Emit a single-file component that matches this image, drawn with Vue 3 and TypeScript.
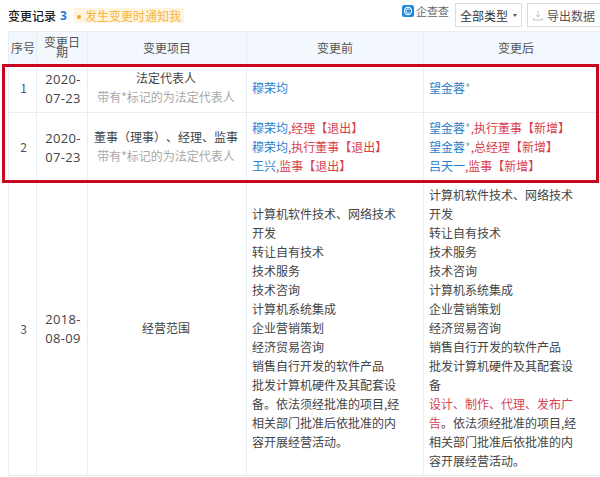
<script setup lang="ts">
interface Part { t: string; c?: string }
type Line = Part[]
const zhu = '带有*标记的为法定代表人'
const scopeBefore = ['计算机软件技术、网络技术开发','转让自有技术','技术服务','技术咨询','计算机系统集成','企业营销策划','经济贸易咨询','销售自行开发的软件产品','批发计算机硬件及其配套设备。依法须经批准的项目,经相关部门批准后依批准的内容开展经营活动。']
const scopeAfterTop = ['计算机软件技术、网络技术开发','转让自有技术','技术服务','技术咨询','计算机系统集成','企业营销策划','经济贸易咨询','销售自行开发的软件产品','批发计算机硬件及其配套设备']
const row2Before: Line[] = [
  [{ t: '穆荣均', c: 'blue' }, { t: ',经理【退出】', c: 'red' }],
  [{ t: '穆荣均', c: 'blue' }, { t: ',执行董事【退出】', c: 'red' }],
  [{ t: '王兴', c: 'blue' }, { t: ',监事【退出】', c: 'red' }],
]
const row2After: Line[] = [
  [{ t: '望金蓉', c: 'blue' }, { t: '*', c: 'grey' }, { t: ',执行董事【新增】', c: 'red' }],
  [{ t: '望金蓉', c: 'blue' }, { t: '*', c: 'grey' }, { t: ',总经理【新增】', c: 'red' }],
  [{ t: '吕天一', c: 'blue' }, { t: ',监事【新增】', c: 'red' }],
]
</script>

<template>
  <div class="page">
    <div class="bar">
      <div class="title">
        <span class="name">变更记录</span>
        <span class="count">3</span>
        <span class="notify"><i class="dot"></i>发生变更时通知我</span>
      </div>
      <div class="tools">
        <span class="logo">
          <svg width="12" height="12" viewBox="0 0 12 12">
            <rect width="12" height="12" rx="2.5" fill="#1e88d8" />
            <circle cx="6" cy="6" r="3.6" fill="none" stroke="#fff" stroke-width="1.1" />
            <path d="M7.6 4.8A2 2 0 1 0 7.6 7.2" fill="none" stroke="#fff" stroke-width="1" />
          </svg>
          <span>企查查</span>
        </span>
        <button class="btn type">全部类型<i class="caret"></i></button>
        <button class="btn export">
          <svg width="10" height="11" viewBox="0 0 10 11">
            <path d="M5 1v6M3 5l2 2 2-2M.5 8v2h9V8" fill="none" stroke="#c4c4c4" stroke-width="1" />
          </svg>
          <span>导出数据</span>
        </button>
      </div>
    </div>

    <div class="wrap">
      <table>
        <colgroup>
          <col class="c1" /><col class="c2" /><col class="c3" /><col class="c4" /><col class="c5" />
        </colgroup>
        <thead>
          <tr>
            <th>序号</th>
            <th class="datehead">变更日期</th>
            <th>变更项目</th>
            <th>变更前</th>
            <th>变更后</th>
          </tr>
        </thead>
        <tbody>
          <tr class="r1">
            <td class="center idx">1</td>
            <td class="center date">2020-<br />07-23</td>
            <td class="center">法定代表人<div class="grey">{{ zhu }}</div></td>
            <td><span class="blue">穆荣均</span></td>
            <td><span class="blue">望金蓉</span><span class="grey">*</span></td>
          </tr>
          <tr class="r2">
            <td class="center idx">2</td>
            <td class="center date">2020-<br />07-23</td>
            <td class="center">董事（理事）、经理、监事<div class="grey">{{ zhu }}</div></td>
            <td>
              <div v-for="(l, i) in row2Before" :key="i"><span v-for="(p, j) in l" :key="j" :class="p.c">{{ p.t }}</span></div>
            </td>
            <td>
              <div v-for="(l, i) in row2After" :key="i"><span v-for="(p, j) in l" :key="j" :class="p.c">{{ p.t }}</span></div>
            </td>
          </tr>
          <tr class="r3">
            <td class="center idx">3</td>
            <td class="center date">2018-<br />08-09</td>
            <td class="center">经营范围</td>
            <td><div v-for="s in scopeBefore" :key="s">{{ s }}</div></td>
            <td>
              <div v-for="s in scopeAfterTop" :key="s">{{ s }}</div>
              <div><span class="red">设计、制作、代理、发布广告</span>。依法须经批准的项目,经相关部门批准后依批准的内容开展经营活动。</div>
            </td>
          </tr>
        </tbody>
      </table>
      <div class="highlight"></div>
    </div>
  </div>
</template>

<style>
html, body { margin: 0; background: #fff; }
</style>

<style scoped>
.page {
  width: 600px;
  height: 477px;
  overflow: hidden;
  position: relative;
  font-family: "Noto Sans CJK SC", "Noto Sans", sans-serif;
  font-size: 12px;
  color: #444;
  background: #fff;
  text-spacing-trim: space-all;
}
.bar {
  height: 31px;
  padding-left: 8px;
  display: flex;
  justify-content: space-between;
  box-sizing: border-box;
}
.title { display: flex; align-items: center; height: 30px; }
.name { color: #222; font-weight: 500; }
.count { color: #1e7fd0; font-weight: 700; margin-left: 4px; font-family: "Open Sans", sans-serif; }
.notify {
  margin-left: 7px;
  width: 110px;
  background: #fff4df;
  color: #f5b73d;
  display: flex;
  align-items: center;
  height: 15px;
}
.dot { width: 4px; height: 4px; border-radius: 50%; background: #f5a623; margin: 3px 4px 0 3px; }
.tools { display: flex; align-items: flex-start; padding-top: 3px; }
.logo { display: flex; align-items: center; gap: 2px; color: #666; margin: 2px 6px 0 0; height: 12px; font-size: 11px; }
.btn {
  font: inherit;
  font-size: 12px;
  background: #fff;
  color: #333;
  border: 1px solid #ddd;
  height: 24px;
  padding: 0;
  margin: 0 5px 0 0;
  box-sizing: border-box;
  display: flex;
  align-items: center;
  justify-content: center;
}
.type { width: 67px; gap: 5px; }
.export { width: 74px; margin-right: -1px; gap: 4px; color: #555; justify-content: flex-start; }
.export svg { margin-left: 5px; }
.caret { width: 0; height: 0; border: 2px solid transparent; border-top: 3px solid #555; margin-top: 3px; }
.wrap { position: relative; padding-left: 8px; width: 600px; box-sizing: border-box; }
table {
  border-collapse: collapse;
  table-layout: fixed;
  width: 600px;
  line-height: 19px;
}
.c1 { width: 28px; }
.c2 { width: 51px; }
.c3 { width: 159px; }
.c4 { width: 177px; }
.c5 { width: 185px; }
th, td { border: 1px solid #e6edf3; padding: 0 5px; box-sizing: border-box; }
th {
  height: 33px;
  background: #f2f8fd;
  font-weight: 400;
  color: #555;
  text-align: center;
  white-space: nowrap;
  padding-bottom: 2px;
}
th:first-child { padding: 0 2px 2px; }
.datehead { white-space: normal; line-height: 10px; padding: 0 6px 2px; }
td { word-break: break-all; }
td:nth-child(4), td:nth-child(5) { padding: 0 0 3px 5px; }
td:nth-child(4) > div, td:nth-child(5) > div { width: 150px; }
tr.r1 td { height: 48px; }
tr.r2 td { height: 70px; }
tr.r3 td { height: 293px; }
.center { text-align: center; padding: 0 2px 3px 0; }
td.idx { color: #555; padding: 0 0 2px 2px; }
td.date { font-size: 13px; font-family: "Open Sans", sans-serif; letter-spacing: .3px; padding: 0 0 0 2px; }
.grey { color: #a8a8a8; }
.blue { color: #2b80cc; }
.red { color: #d9404f; }
.highlight {
  position: absolute;
  left: 2px;
  top: 33px;
  width: 597px;
  height: 119px;
  border: 3px solid #c8081f;
  box-sizing: border-box;
  pointer-events: none;
}
</style>
